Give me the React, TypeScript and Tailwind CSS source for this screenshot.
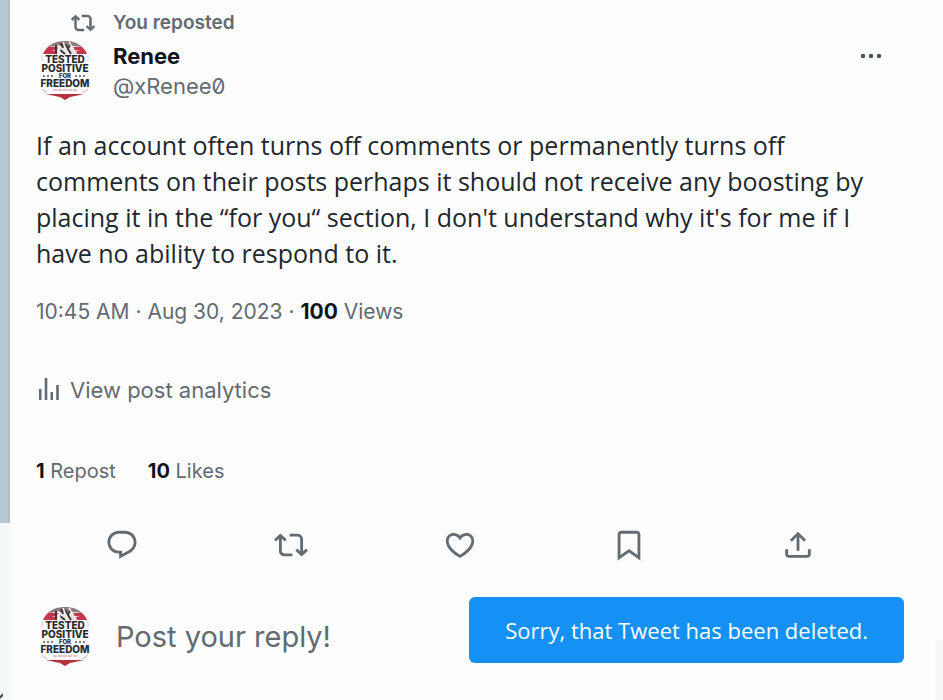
import type { ReactNode } from 'react';

const actions = [
    {
        label: 'Reply',
        path: 'M1.751 10c0-4.42 3.584-8 8.005-8h4.366c4.49 0 8.129 3.64 8.129 8.13 0 2.96-1.607 5.68-4.196 7.11l-8.054 4.46v-3.69h-.067c-4.49.1-8.183-3.51-8.183-8.01zm8.005-6c-3.317 0-6.005 2.69-6.005 6 0 3.37 2.77 6.08 6.138 6.01l.351-.01h1.761v2.3l5.087-2.81c1.951-1.08 3.163-3.13 3.163-5.36 0-3.39-2.744-6.13-6.129-6.13H9.756z',
    },
    {
        label: 'Repost',
        path: 'M4.5 3.88l4.432 4.14-1.364 1.46L5.5 7.55V16c0 1.1.896 2 2 2H13v2H7.5c-2.209 0-4-1.79-4-4V7.55L1.432 9.48.068 8.02 4.5 3.88zM16.5 6H11V4h5.5c2.209 0 4 1.79 4 4v8.45l2.068-1.93 1.364 1.46-4.432 4.14-4.432-4.14 1.364-1.46 2.068 1.93V8c0-1.1-.896-2-2-2z',
    },
    {
        label: 'Like',
        path: 'M16.697 5.5c-1.222-.06-2.679.51-3.89 2.16l-.805 1.09-.806-1.09C9.984 6.01 8.526 5.44 7.304 5.5c-1.243.07-2.349.78-2.91 1.91-.552 1.12-.633 2.78.479 4.82 1.074 1.97 3.257 4.27 7.129 6.61 3.87-2.34 6.052-4.64 7.126-6.61 1.111-2.04 1.03-3.7.477-4.82-.561-1.13-1.666-1.84-2.908-1.91zm4.187 7.69c-1.351 2.48-4.001 5.12-8.379 7.67l-.503.3-.504-.3c-4.379-2.55-7.029-5.19-8.382-7.67-1.36-2.5-1.41-4.86-.514-6.67.887-1.79 2.647-2.91 4.601-3.01 1.651-.09 3.368.56 4.798 2.01 1.429-1.45 3.146-2.1 4.796-2.01 1.954.1 3.714 1.22 4.601 3.01.896 1.81.846 4.17-.514 6.67z',
    },
    {
        label: 'Bookmark',
        path: 'M4 4.5C4 3.12 5.119 2 6.5 2h11C18.881 2 20 3.12 20 4.5v18.44l-8-5.71-8 5.71V4.5zM6.5 4c-.276 0-.5.22-.5.5v14.56l6-4.29 6 4.29V4.5c0-.28-.224-.5-.5-.5h-11z',
    },
    {
        label: 'Share',
        path: 'M12 2.59l5.7 5.7-1.41 1.42L13 6.41V16h-2V6.41l-3.3 3.3-1.41-1.42L12 2.59zM21 15l-.02 3.51c0 1.38-1.12 2.49-2.5 2.49H5.5C4.11 21 3 19.88 3 18.5V15h2v3.5c0 .28.22.5.5.5h12.98c.28 0 .5-.22.5-.5L19 15h2z',
    },
];

function Icon({ path, className }: { path: string; className: string }) {
    return (
        <svg viewBox="0 0 24 24" fill="currentColor" aria-hidden="true" className={className}>
            <path d={path} />
        </svg>
    );
}

function Avatar() {
    return (
        <svg viewBox="0 0 60 60" role="img" aria-label="Renee" className="w-[60px] h-[60px] shrink-0">
            {/* Flag dome */}
            <path d="M7 13C10 5 18 0 29 0s19 5 22 13z" fill="#eee4e4" />
            <path d="M7 13c1-3 3-5 5-7h10l-1 3h-6l5 1v3zM51 13c-1-3-3-5-5-7H36l2 3h6l-4 1 1 3z" fill="#c4364a" />
            <path d="M12 6C16 2 22 0 29 0s13 2 17 6l-8-1-18 0z" fill="#8a7c7e" />
            <path d="M20 4v9M25 2l2 5M29 3l6 10M24 9l5 4M35 3l-3 4" stroke="#3a3436" strokeWidth="2" fill="none" />
            <path d="M22 4l2 8M27 1l5 12M33 1l5 8" stroke="#f7eeee" strokeWidth="1.5" fill="none" />
            <path d="M6 14v6M52 14v6" stroke="#cfc9c9" />
            <text fill="#292a2d" fontFamily="Inter, sans-serif" fontWeight="800" fontSize="10" textAnchor="middle">
                <tspan x="29" y="22">TESTED</tspan>
                <tspan x="29" y="31">POSITIVE</tspan>
                <tspan x="29" y="37" fontSize="6">FOR</tspan>
                <tspan x="29" y="46">FREEDOM</tspan>
            </text>
            <path d="M7 35h12M39 35h12" stroke="#555" strokeWidth="1.5" strokeDasharray="2 2" />
            <path d="M17 49h25" stroke="#d68388" strokeDasharray="4 1" />
            <path d="M10 53h38l-9 2-5 1-5 3-5-3-5-1z" fill="#b9303d" />
            <path d="M6 48l5 4M52 48l-5 4" stroke="#d8a9ac" />
        </svg>
    );
}

function Count({ value, children }: { value: string; children: ReactNode }) {
    return (
        <a href="#stats">
            <strong className="font-bold text-[#0f1419]">{value}</strong> {children}
        </a>
    );
}

export default function App() {
    return (
        <div className="flex min-h-screen bg-[#fdfdfd] font-['Inter','Noto_Sans',sans-serif] text-[22px] leading-[30px] text-[#626a72]">
            {/* Page edge on the left */}
            <div className="flex w-3 shrink-0 flex-col">
                <div className="h-[523px] w-[10px] border-r-2 border-[#b4bfc8] bg-[#b5c8d2]" />
                <div className="flex flex-1 items-end bg-[#f7f8f8]">
                    <svg viewBox="0 0 4 8" aria-hidden="true" className="h-2 w-1">
                        <path d="M0 4l3-3v3l-3 3z" fill="#4a4a4a" />
                    </svg>
                </div>
            </div>

            <main className="min-w-0 flex-1 pt-2 pr-[61px] pl-6">
                <article>
                    <p className="flex items-center text-[19px] leading-[30px] font-semibold">
                        <span className="flex w-[77px] pl-[35px]">
                            <Icon path={actions[1].path} className="w-6 h-6 stroke-current stroke-[0.5]" />
                        </span>
                        You reposted
                    </p>

                    <header className="mt-[3px] flex items-start">
                        <div className="w-[77px]">
                            <Avatar />
                        </div>
                        <div className="flex-1">
                            <h1 className="font-bold text-[#0f1419]">Renee</h1>
                            <p className="slashed-zero">@xRenee0</p>
                        </div>
                        <button type="button" aria-label="More" className="flex h-[30px] items-center text-[#4f565c]">
                            <svg viewBox="0 0 24 6" fill="currentColor" className="w-6 h-[6px]">
                                <circle cx="5" cy="3" r="2.3" />
                                <circle cx="13" cy="3" r="2.3" />
                                <circle cx="21" cy="3" r="2.3" />
                            </svg>
                        </button>
                    </header>

                    <p className="mt-[26px] font-['Open_Sans','Noto_Sans',sans-serif] text-[25px] leading-9 whitespace-nowrap text-[#20272d]">
                        If an account often turns off comments or permanently turns off
                        <br />
                        comments on their posts perhaps it should not receive any boosting by
                        <br />
                        placing it in the “for you“ section, I don't understand why it's for me if I
                        <br />
                        have no ability to respond to it.
                    </p>

                    <p className="mt-[26px] text-[21px] leading-[30px]">
                        10:45 AM · Aug 30, 2023 · <strong className="font-bold text-[#0f1419]">100</strong> Views
                    </p>

                    <a href="#analytics" className="mt-12 flex items-center gap-2">
                        <svg viewBox="0 0 26 30" fill="currentColor" aria-hidden="true" className="w-[26px] h-[30px]">
                            <path d="M3 14h2.5v11H3zM8.7 3h2.6v22H8.7zM14.5 17H17v8h-2.500zM20.200 10h2.600v15h-2.600z" />
                        </svg>
                        View post analytics
                    </a>

                    <div className="mt-[51px] flex gap-8 text-xl leading-[30px]">
                        <Count value="1">Repost</Count>
                        <Count value="10">Likes</Count>
                    </div>

                    <div className="mt-[42px] grid grid-cols-5 pl-[2px]">
                        {actions.map(({ label, path }) => (
                            <button key={label} type="button" aria-label={label} className="flex justify-center">
                                <Icon path={path} className="w-[34px] h-[34px]" />
                            </button>
                        ))}
                    </div>
                </article>

                <form className="mt-[45px] flex items-center">
                    <Avatar />
                    <input
                        type="text"
                        aria-label="Post your reply"
                        placeholder="Post your reply!"
                        className="ml-5 w-[300px] text-[29px] leading-9 placeholder:text-[#626a72]"
                    />
                </form>
            </main>

            <div className="fixed right-0 bottom-0 h-[60px] w-2 bg-[#f6f6f6]" />

            <div
                role="status"
                className="fixed right-[39px] bottom-[37px] rounded-md bg-[#1590f5] px-9 py-[18px] font-['Open_Sans','Noto_Sans',sans-serif] text-white"
            >
                Sorry, that Tweet has been deleted.
            </div>
        </div>
    );
}
